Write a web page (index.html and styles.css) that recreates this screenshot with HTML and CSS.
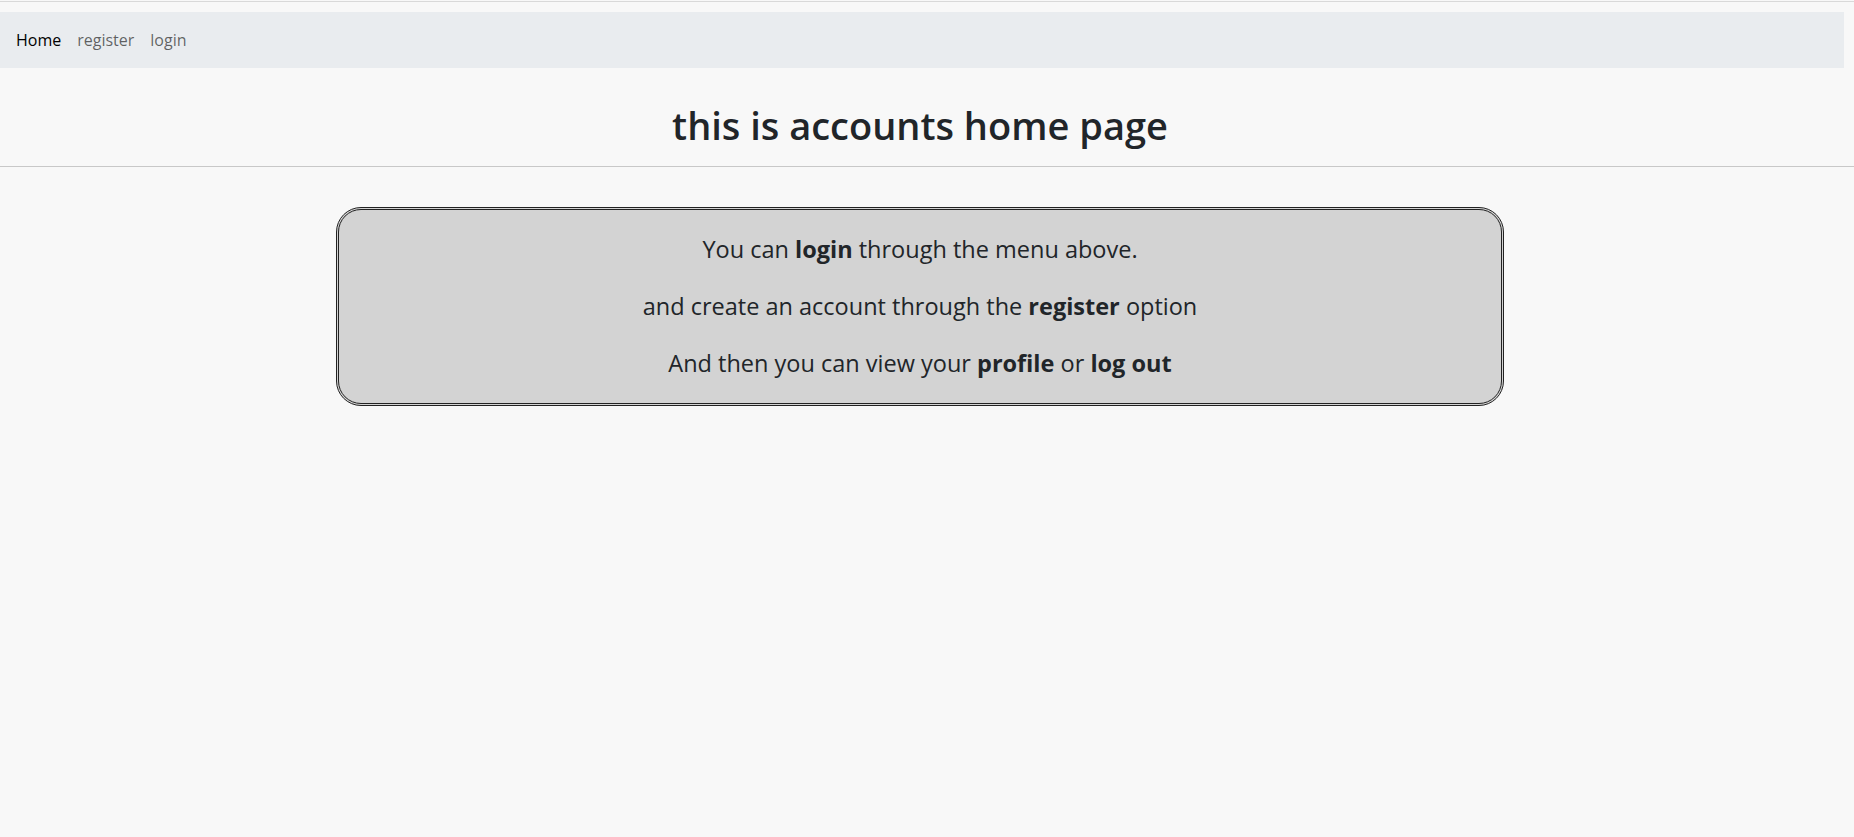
FILE: index.html
```html
<!DOCTYPE html>
<html lang="en">
<head>
<meta charset="utf-8">
<title>accounts</title>
<link rel="stylesheet" href="styles.css">
</head>
<body>
<div class="topline"></div>
<nav class="navbar">
  <a class="nav-link active" href="#">Home</a>
  <a class="nav-link" href="#">register</a>
  <a class="nav-link" href="#">login</a>
</nav>
<header class="page-head">
  <h1 class="title">this is accounts home page</h1>
</header>
<hr class="rule">
<main class="content">
  <section class="info-box">
    <p class="line">You can <b>login</b> through the menu above.</p>
    <p class="line">and create an account through the <b>register</b> option</p>
    <p class="line">And then you can view your <b>profile</b> or <b>log out</b></p>
  </section>
</main>
</body>
</html>
```
FILE: styles.css
```css
html, body {
  margin: 0;
  padding: 0;
}
body {
  background: #f8f8f8;
  font-family: "Open Sans", "Noto Sans", sans-serif;
  color: #212529;
}
.topline {
  margin-top: 1px;
  height: 1px;
  background: #d9d9d9;
}
.navbar {
  margin-top: 10px;
  width: 1844px;
  height: 56px;
  box-sizing: border-box;
  background: #e9ecef;
  display: flex;
  align-items: center;
  padding: 0 8px;
}
.nav-link {
  font-size: 16px;
  line-height: 24px;
  padding: 8px;
  text-decoration: none;
  color: rgba(0, 0, 0, 0.6);
}
.nav-link.active {
  color: #000;
}
.page-head {
  width: 1840px;
  display: flex;
  justify-content: center;
  padding-top: 34px;
}
.title {
  margin: 0;
  font-size: 38px;
  font-weight: 600;
  line-height: 47px;
}
.rule {
  margin: 17px 0 0 0;
  border: 0;
  border-top: 1px solid #c8c8c8;
}
.content {
  width: 1840px;
  display: flex;
  justify-content: center;
  padding-top: 40px;
}
.info-box {
  width: 1168px;
  height: 199px;
  box-sizing: border-box;
  background: #d3d3d3;
  border: 3px double #222;
  border-radius: 25px;
  padding-top: 23px;
  display: flex;
  flex-direction: column;
  align-items: center;
  gap: 24px;
}
.line {
  margin: 0;
  font-size: 23.5px;
  line-height: 33px;
}
.line b {
  font-weight: 700;
}
```
